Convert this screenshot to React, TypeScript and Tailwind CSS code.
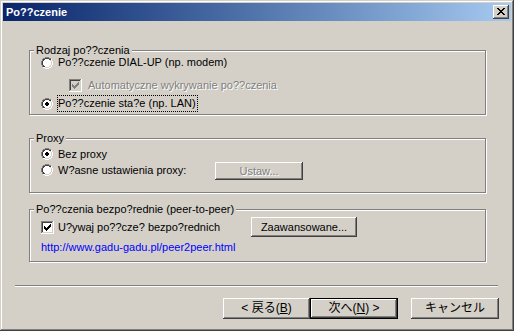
import type { ReactNode } from 'react';

type Px = [number, number, number, string];

// pixel runs: x, y, width, colour
function Pixels({ w, h, runs, className }: { w: number; h: number; runs: Px[]; className?: string }) {
  return (
    <svg width={w} height={h} viewBox={`0 0 ${w} ${h}`} shapeRendering="crispEdges" className={`shrink-0 ${className ?? ''}`}>
      {runs.map(([x, y, rw, c], i) => (
        <rect key={i} x={x} y={y} width={rw} height={1} fill={c} />
      ))}
    </svg>
  );
}

const G = '#808080';
const D = '#404040';
const W = '#ffffff';
const L = '#d4d0c8';

function Radio({ checked }: { checked?: boolean }) {
  const runs: Px[] = [
    [4, 0, 4, G], [2, 1, 2, G], [8, 1, 2, G], [1, 2, 1, G], [1, 3, 1, G],
    [0, 4, 1, G], [0, 5, 1, G], [0, 6, 1, G], [0, 7, 1, G], [1, 8, 1, G], [1, 9, 1, G],
    [10, 2, 1, W], [10, 3, 1, W], [11, 4, 1, W], [11, 5, 1, W], [11, 6, 1, W], [11, 7, 1, W],
    [10, 8, 1, W], [10, 9, 1, W], [2, 10, 2, W], [8, 10, 2, W], [4, 11, 4, W],
    [4, 1, 4, D], [2, 2, 2, D], [8, 2, 2, D], [2, 3, 1, D], [1, 4, 1, D], [1, 5, 1, D],
    [1, 6, 1, D], [1, 7, 1, D], [2, 8, 1, D], [2, 9, 2, D],
    [9, 3, 1, L], [10, 4, 1, L], [10, 5, 1, L], [10, 6, 1, L], [10, 7, 1, L], [9, 8, 1, L],
    [8, 9, 2, L], [4, 10, 4, L],
    [4, 2, 4, W], [3, 3, 6, W], [2, 4, 8, W], [2, 5, 8, W], [2, 6, 8, W], [2, 7, 8, W],
    [3, 8, 6, W], [4, 9, 4, W],
  ];
  if (checked) runs.push([5, 4, 2, '#000'], [4, 5, 4, '#000'], [4, 6, 4, '#000'], [5, 7, 2, '#000']);
  return <Pixels w={12} h={12} runs={runs} />;
}

function Check({ checked, disabled }: { checked?: boolean; disabled?: boolean }) {
  const fill = disabled ? L : W;
  const mark = disabled ? G : '#000';
  const runs: Px[] = [
    [0, 0, 12, G], ...Array.from({ length: 12 }, (_, i) => [0, i, 1, G] as Px),
    [0, 12, 13, W], ...Array.from({ length: 12 }, (_, i) => [12, i, 1, W] as Px),
    [1, 1, 10, D], ...Array.from({ length: 10 }, (_, i) => [1, i + 1, 1, D] as Px),
    [1, 11, 11, L], ...Array.from({ length: 10 }, (_, i) => [11, i + 1, 1, L] as Px),
    ...Array.from({ length: 9 }, (_, i) => [2, i + 2, 9, fill] as Px),
  ];
  if (checked)
    runs.push(
      [9, 3, 1, mark], [8, 4, 2, mark], [3, 5, 1, mark], [7, 5, 3, mark],
      [3, 6, 2, mark], [6, 6, 3, mark], [3, 7, 5, mark], [4, 8, 3, mark], [5, 9, 1, mark],
    );
  return <Pixels w={13} h={13} runs={runs} />;
}

const bevel =
  'shadow-[inset_-1px_-1px_0_#404040,inset_1px_1px_0_#fff,inset_-2px_-2px_0_#808080]';

function Group({ title, className, children }: { title: string; className: string; children: ReactNode }) {
  return (
    <div className={`relative w-[457px] border border-[#808080] shadow-[1px_1px_0_#fff,inset_1px_1px_0_#fff] ${className}`}>
      <span className="absolute -top-[7px] left-[4px] bg-[#d4d0c8] px-[2px] leading-[13px]">{title}</span>
      {children}
    </div>
  );
}

const grey = 'text-[#808080] [text-shadow:1px_1px_0_#fff]';

export default function App() {
  return (
    <div className="w-[514px] h-[331px] bg-[#d4d0c8] p-[3px] flex flex-col text-[11px] leading-[13px] text-black font-['Liberation_Sans',Arial,sans-serif] shadow-[inset_-1px_-1px_0_#404040,inset_1px_1px_0_#d4d0c8,inset_-2px_-2px_0_#808080,inset_2px_2px_0_#fff]">
      <div className="h-[18px] flex items-center justify-between pl-[3px] pr-[2px] bg-gradient-to-r from-[#0a246a] to-[#a6caf0]">
        <span className="font-bold text-white">Po??czenie</span>
        <div className={`w-[16px] h-[14px] bg-[#d4d0c8] flex items-center justify-center ${bevel}`}>
          <Pixels
            w={8}
            h={7}
            className="-mt-px -ml-px"
            runs={[
              [0, 0, 2, '#000'], [6, 0, 2, '#000'], [1, 1, 2, '#000'], [5, 1, 2, '#000'],
              [2, 2, 4, '#000'], [3, 3, 2, '#000'], [2, 4, 4, '#000'],
              [1, 5, 2, '#000'], [5, 5, 2, '#000'], [0, 6, 2, '#000'], [6, 6, 2, '#000'],
            ]}
          />
        </div>
      </div>

      <div className="flex-1 flex flex-col">
        <div className="pl-[26px] pt-[29px] flex flex-col">
          <Group title="Rodzaj po??czenia" className="h-[65px] pt-[3px] pl-[11px]">
            <div className="h-[17px] flex items-center">
              <Radio />
              <span className="ml-[5px]">Po??czenie DIAL-UP (np. modem)</span>
            </div>
            <div className="h-[17px] mt-[6px] flex items-center pl-[28px]">
              <Check checked disabled />
              <span className={`ml-[6px] ${grey}`}>Automatyczne wykrywanie po??czenia</span>
            </div>
            <div className="h-[17px] mt-[1px] flex items-center">
              <Radio checked />
              <span className="ml-[4px] h-full flex items-center pr-[1px] border border-dotted border-black">
                Po??czenie sta?e (np. LAN)
              </span>
            </div>
          </Group>

          <Group title="Proxy" className="h-[55px] mt-[23px] pt-[7px] pl-[11px]">
            <div className="h-[16px] flex items-center">
              <Radio checked />
              <span className="ml-[5px]">Bez proxy</span>
            </div>
            <div className="flex items-start">
              <div className="w-[174px] h-[16px] flex items-center">
                <Radio />
                <span className="ml-[5px]">W?asne ustawienia proxy:</span>
              </div>
              <div className={`w-[88px] h-[18px] flex items-center justify-center ${bevel} ${grey}`}>Ustaw...</div>
            </div>
          </Group>

          <Group title="Po??czenia bezpo?rednie (peer-to-peer)" className="h-[53px] mt-[16px] pt-[7px] pl-[11px]">
            <div className="h-[20px] flex items-center">
              <div className="w-[210px] flex items-center">
                <Check checked />
                <span className="ml-[4px]">U?ywaj po??cze? bezpo?rednich</span>
              </div>
              <div className={`w-[106px] h-[20px] flex items-center justify-center ${bevel}`}>Zaawansowane...</div>
            </div>
            <div className="mt-[4px] h-[13px] text-[#0000ff]">http://www.gadu-gadu.pl/peer2peer.html</div>
          </Group>
        </div>

        <div className="ml-[12px] mt-[23px] w-[483px] h-[2px] border-t border-t-[#808080] border-b border-b-white" />

        <div className="mt-[11px] flex pl-[220px] text-[12px] font-['Liberation_Sans','Noto_Sans_CJK_JP',sans-serif]">
          <div className={`w-[87px] h-[21px] flex items-center justify-center ${bevel}`}>
            &lt; 戻る(<span className="underline">B</span>)
          </div>
          <div className={`w-[88px] h-[21px] flex items-center justify-center border border-black ${bevel}`}>
            次へ(<span className="underline">N</span>) &gt;
          </div>
          <div className={`ml-[13px] w-[88px] h-[21px] flex items-center justify-center ${bevel}`}>キャンセル</div>
        </div>
      </div>
    </div>
  );
}
